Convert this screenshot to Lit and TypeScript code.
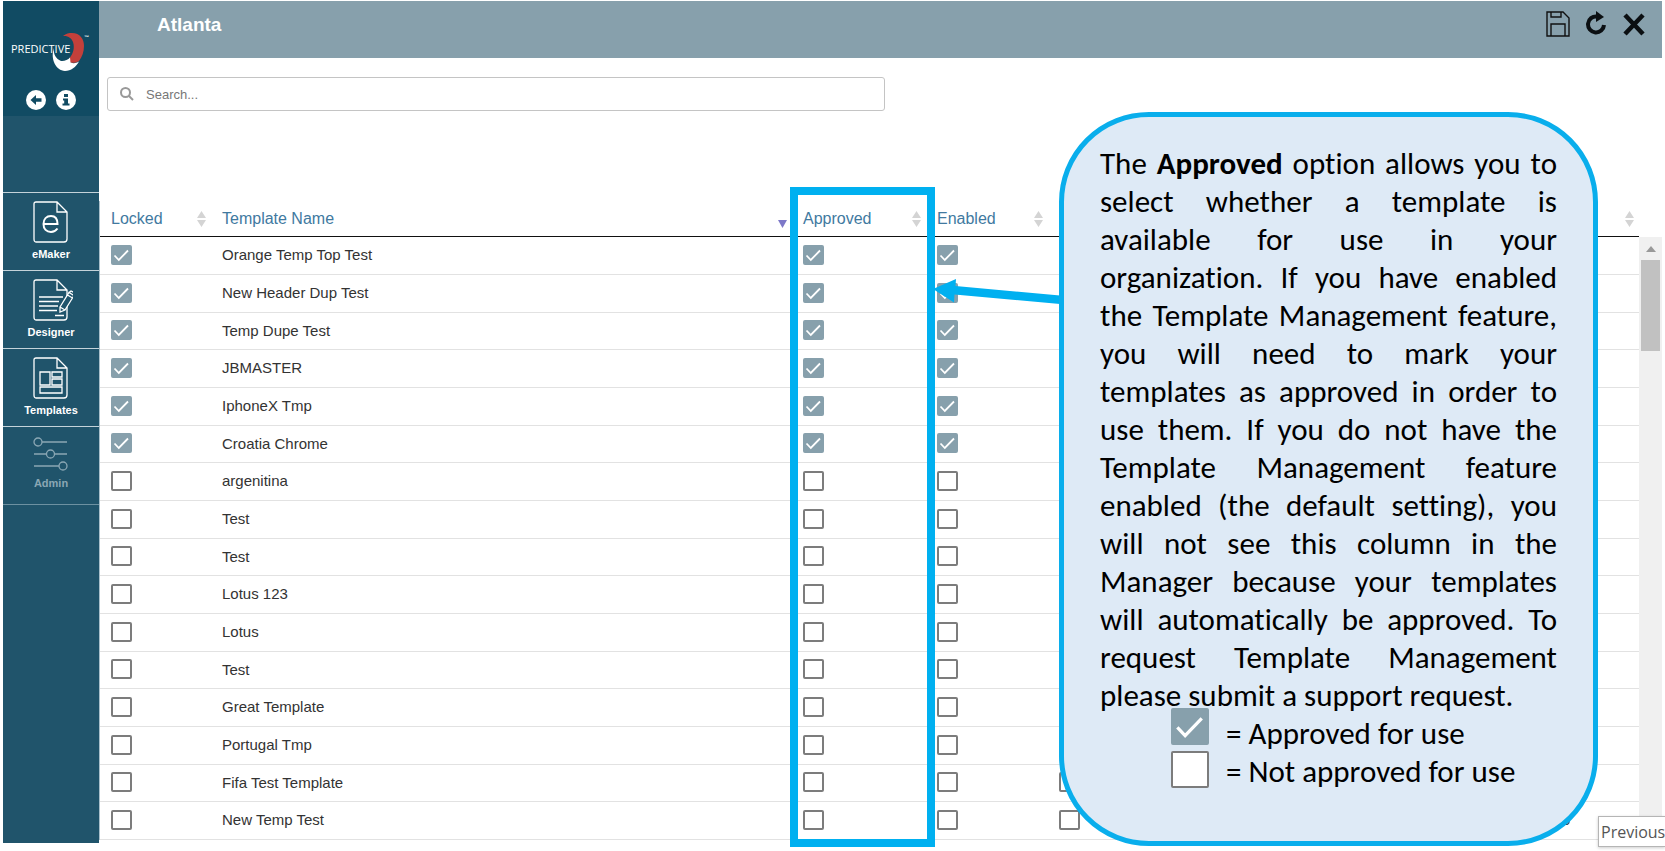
import { LitElement, html, css, svg } from "lit";
import { customElement, property, state } from "lit/decorators.js";

interface Template {
  name: string;
  locked: boolean;
  approved: boolean;
  enabled: boolean;
  uses: number;
}

const row = (name: string, on: boolean): Template => ({ name, locked: on, approved: on, enabled: on, uses: 0 });

const TEMPLATES: Template[] = [
  row("Orange Temp Top Test", true),
  row("New Header Dup Test", true),
  row("Temp Dupe Test", true),
  row("JBMASTER", true),
  row("IphoneX Tmp", true),
  row("Croatia Chrome", true),
  row("argenitina", false),
  row("Test", false),
  row("Test", false),
  row("Lotus 123", false),
  row("Lotus", false),
  row("Test", false),
  row("Great Template", false),
  row("Portugal Tmp", false),
  row("Fifa Test Template", false),
  row("New Temp Test", false),
];

@customElement("check-box")
class CheckBox extends LitElement {
  @property({ type: Boolean }) checked = false;
  @property() label = "";
  @property({ type: Boolean, reflect: true }) large = false;

  static styles = css`
    :host { display: inline-block; vertical-align: top; }
    .box { display: grid; width: 21px; height: 20px; }
    :host([large]) .box { width: 38px; height: 37px; }
    .input, .mark { grid-area: 1 / 1; width: 100%; height: 100%; box-sizing: border-box; }
    .input { appearance: none; margin: 0; border: 2px solid #7c7c7c; border-radius: 2px; background: #fff; }
    .input:checked { background: #87a0ac; border-color: #87a0ac; }
    .mark { display: none; pointer-events: none; }
    .input:checked + .mark { display: block; }
  `;

  render() {
    return html`<label class="box">
      <input class="input" type="checkbox" aria-label=${this.label} .checked=${this.checked}
        @change=${(e: Event) => (this.checked = (e.target as HTMLInputElement).checked)} />
      <svg class="mark" viewBox="0 0 21 20" fill="none" stroke="#fff" stroke-width="1.800">
        <path d="M3.500 10.500 7.800 15 17 5.500" />
      </svg>
    </label>`;
  }
}

const page = svg`<path d="M3 1H24L34 11V38Q34 41 31 41H3Q1 41 1 38V3Q1 1 3 1Z M24 1V11H34" />`;

const NAV = [
  { label: "eMaker", icon: svg`${page}<path d="M11 23H24.500C24.500 17.500 22 15 18 15C13.500 15 10.500 18 10.500 23C10.500 28 13.500 31 18 31C21 31 23 29.500 24.500 27.500" stroke-width="2" />` },
  { label: "Designer", icon: svg`${page}<path d="M6 18H30M6 22.500H26M6 27H25M6 31.500H24M22 36.500H31" /><path d="M27 28 36 13.500 41 16.500 32 31 27 33ZM34.500 16 39.500 19M27 28 32 31M36 13.500 38 12 43 14.500 41 16.500" fill="#20546b" />` },
  { label: "Templates", icon: svg`${page}<path d="M7 15H17V28H7ZM19 15H29V20H19ZM19 22H29V28H19ZM7 30H29V36H7Z" />` },
];

@customElement("app-root")
class AppRoot extends LitElement {
  @state() private query = "";

  static styles = css`
    :host { display: block; font-family: "Liberation Sans", Arial, sans-serif; color: #333; background: #fff; }
    .shell { position: relative; display: flex; box-sizing: border-box; min-height: 100vh; padding: 1px 3px 8px; overflow: hidden; }
    .side { flex: none; width: 96px; display: flex; flex-direction: column; background: #20546b; }
    .brand { box-sizing: border-box; height: 115px; padding-top: 29px; background: #114b63; display: flex; flex-direction: column; align-items: center; gap: 18px; }
    .logo { width: 80px; height: 42px; }
    .word { font: 11px "Open Sans", sans-serif; fill: #fff; }
    .tm { font: bold 5px "Liberation Sans", sans-serif; fill: #fff; }
    .tools { display: flex; gap: 10px; }
    .icon { display: block; padding: 0; border: 0; background: none; cursor: pointer; }
    .icon svg { display: block; }
    .nav { display: flex; flex-direction: column; margin-top: 76px; border-top: 1px solid #c4d3da; }
    .item { display: flex; flex-direction: column; align-items: center; gap: 2px; height: 77px; padding-top: 8px; box-sizing: border-box; margin-bottom: 1px; box-shadow: 0 1px #c4d3da; color: #fff; text-decoration: none; font-size: 11px; line-height: 16px; font-weight: bold; }
    .item svg { fill: none; stroke: #fff; stroke-width: 1.3; }
    .item.dim { color: #8aa7b4; padding-top: 10px; box-shadow: 0 1px #6d91a1; gap: 4px; }
    .item.dim svg { stroke: #8aa7b4; }
    .main { flex: 1; min-width: 0; display: flex; flex-direction: column; }
    .bar { display: flex; justify-content: space-between; box-sizing: border-box; height: 57px; padding: 10px 17px 0 58px; background: #87a0ac; }
    .title { margin: 0; font-size: 19px; line-height: 28px; color: #fff; }
    .actions { display: flex; gap: 16px; align-items: flex-start; }
    .search { display: flex; align-items: center; gap: 12px; box-sizing: border-box; width: calc(50% - 4px); height: 34px; margin: 19px 0 0 8px; padding: 0 12px; border: 1px solid #c4c4c4; border-radius: 3px; }
    .field { flex: 1; border: 0; outline: 0; padding: 0; font: 13px "Liberation Sans", Arial, sans-serif; color: #333; }
    .field::placeholder { color: #777; opacity: 1; }
    .list { display: flex; margin-top: 90px; border-left: 1px solid #a9c0cb; }
    .grid { flex: 1; border-collapse: separate; border-spacing: 0; table-layout: fixed; width: 100%; font-size: 15px; }
    .grid th, .grid td { padding: 0 0 0 11px; text-align: left; font-weight: normal; box-sizing: border-box; }
    .grid th { height: 36px; font-size: 16px; color: #41799f; border-bottom: 1px solid #111; }
    .grid td { height: 38px; padding-bottom: 2px; border-bottom: 1px solid #e2e2e2; }
    .grid tr:nth-child(3n) td { height: 37px; }
    .head { display: flex; justify-content: space-between; align-items: center; padding-right: 5px; }
    .sort { fill: #d4d4d4; }
    .sort.on { fill: #7d78c8; align-self: flex-end; }
    .c1 { width: 111px; } .c2 { width: 581px; } .c3 { width: 134px; } .c4 { width: 122px; } .c5 { width: 120px; } .c7 { width: 88px; }
    .track { flex: none; width: 23px; margin-top: 36px; background: #f0f0f0; display: flex; flex-direction: column; align-items: center; gap: 8px; padding-top: 9px; box-sizing: border-box; }
    .thumb { width: 19px; height: 91px; background: #c1c1c1; }
    .frame { position: absolute; left: 790px; top: 187px; width: 145px; height: 660px; box-sizing: border-box; border: 8px solid #00b0f0; pointer-events: none; }
    .arrow { position: absolute; left: 933px; top: 275px; }
    .callout { position: absolute; left: 1059px; top: 112px; width: 539px; height: 734px; box-sizing: border-box; padding: 27px 36px 0; border: 5px solid #09aeec; border-radius: 90px; background: #deeaf6; color: #000; font: 31px/38px Carlito, Calibri, sans-serif; font-variant-ligatures: none; }
    .text { margin: 0; text-align: justify; }
    .legend { display: flex; gap: 17px; margin-left: 71px; align-items: flex-start; }
    .marks { display: flex; flex-direction: column; gap: 6px; margin-top: -6px; }
    .means { display: flex; flex-direction: column; }
    .tip { position: absolute; left: 1598px; right: 0; top: 816px; box-sizing: border-box; height: 31px; padding-left: 2px; border: 1px solid #b5b5b5; border-right: 0; background: #fff; box-shadow: 0 1px 3px #0003; font: 16px/30px "Open Sans", sans-serif; color: #555; }
  `;

  private sort(active = false) {
    return active
      ? html`<svg class="sort on" width="9" height="8" viewBox="0 0 9 8"><path d="M0 0H9L4.500 8Z" /></svg>`
      : html`<svg class="sort" width="9" height="16" viewBox="0 0 9 16"><path d="M0 7 4.500 0 9 7ZM0 9 4.500 16 9 9Z" /></svg>`;
  }

  private th(label: string, active = false) {
    return html`<th scope="col"><div class="head"><span>${label}</span>${this.sort(active)}</div></th>`;
  }

  render() {
    const rows = TEMPLATES.filter((t) => t.name.toLowerCase().includes(this.query.toLowerCase()));
    return html`<div class="shell">
      <aside class="side">
        <div class="brand">
          <svg class="logo" viewBox="0 0 80 42" role="img" aria-label="Predictive">
            <path d="M52 6C55 3.500 58 3 61 3C69 3 73 9 73 16C73 22 71 27 68 31C65 33 62 33 59 32.500L58.500 28C62 24 64 18 62 12C60.500 8 57 5.500 52 6Z" fill="#c4403b" />
            <path d="M43 18C42 24 45 29 50 31C53 31.500 57 30 59 27.500L59.500 32.500C62 33.500 65 33.500 68 31.500C65 37 60 41 54 41C45 40.500 39 29 43 18Z" fill="#fff" />
            <text class="word" x="0" y="23">PREDICTIVE</text>
            <text class="tm" x="73" y="9">™</text>
          </svg>
          <div class="tools">
            <button class="icon" aria-label="Back"><svg width="20" height="20" viewBox="0 0 20 20"><circle cx="10" cy="10" r="10" fill="#fff" /><path d="M4.500 10 10 5V8.300H15.500V11.700H10V15Z" fill="#114b63" /></svg></button>
            <button class="icon" aria-label="Information"><svg width="20" height="20" viewBox="0 0 20 20"><circle cx="10" cy="10" r="10" fill="#fff" /><path d="M8 4H12V7H8ZM7 8.500H12V13.500H13.500V15.500H6.500V13.500H8.200V10.500H7Z" fill="#114b63" /></svg></button>
          </div>
        </div>
        <nav class="nav">
          ${NAV.map((n) => html`<a class="item" href="#"><svg width="44" height="43" viewBox="-4 0 44 43">${n.icon}</svg>${n.label}</a>`)}
          <a class="item dim" href="#"><svg width="36" height="34" viewBox="0 0 36 34"><path d="M9 5H34M1 17H13M22 17H34M1 29H26" /><circle cx="5" cy="5" r="4" /><circle cx="17.500" cy="17" r="4" /><circle cx="30" cy="29" r="4" /></svg>Admin</a>
        </nav>
      </aside>
      <main class="main">
        <header class="bar">
          <h1 class="title">Atlanta</h1>
          <div class="actions">
            <button class="icon" aria-label="Save"><svg width="24" height="26" viewBox="0 0 24 26" fill="none" stroke="#111" stroke-width="1.400"><path d="M1 1H17L23 7V25H1ZM5 1V6H15V1M5 25V13H19V25" /></svg></button>
            <button class="icon" aria-label="Reload"><svg width="21" height="26" viewBox="0 0 21 26"><path d="M11 5.500A8 8 0 1 0 18 14" fill="none" stroke="#0b0f12" stroke-width="4" /><path d="M10 0 18 6 10 11Z" fill="#0b0f12" /></svg></button>
            <button class="icon" aria-label="Close"><svg width="22" height="26" viewBox="0 0 22 26"><path d="M2 4 20 23M20 4 2 23" stroke="#0b0f12" stroke-width="4.500" /></svg></button>
          </div>
        </header>
        <label class="search">
          <svg width="14" height="14" viewBox="0 0 14 14" fill="none" stroke="#999" stroke-width="2"><circle cx="5.500" cy="5.500" r="4.500" /><path d="M9 9 13 13" /></svg>
          <input class="field" type="search" placeholder="Search..." aria-label="Search" @input=${(e: Event) => (this.query = (e.target as HTMLInputElement).value)} />
        </label>
        <div class="list">
          <table class="grid">
            <colgroup><col class="c1" /><col class="c2" /><col class="c3" /><col class="c4" /><col class="c5" /><col /><col class="c7" /></colgroup>
            <thead><tr>
              ${this.th("Locked")}${this.th("Template Name", true)}${this.th("Approved")}${this.th("Enabled")}${this.th("")}${this.th("")}${this.th("")}
            </tr></thead>
            <tbody>
              ${rows.map((t) => html`<tr>
                <td><check-box label="Locked" ?checked=${t.locked}></check-box></td>
                <td>${t.name}</td>
                <td><check-box label="Approved" ?checked=${t.approved}></check-box></td>
                <td><check-box label="Enabled" ?checked=${t.enabled}></check-box></td>
                <td><check-box label="Option"></check-box></td>
                <td></td>
                <td>${t.uses}</td>
              </tr>`)}
            </tbody>
          </table>
          <div class="track">
            <svg width="10" height="6" viewBox="0 0 10 6"><path d="M0 6 5 0 10 6Z" fill="#999" /></svg>
            <div class="thumb"></div>
          </div>
        </div>
      </main>
      <div class="frame"></div>
      <svg class="arrow" width="130" height="30" viewBox="0 0 130 30" fill="#00b0f0"><path d="M0 14 23 4 22.500 11 127 20.500V29L21.500 19.500 21 27.500Z" /></svg>
      <section class="callout">
        <p class="text">The <b>Approved</b> option allows you to select whether a template is available for use in your organization. If you have enabled the Template Management feature, you will need to mark your templates as approved in order to use them. If you do not have the Template Management feature enabled (the default setting), you will not see this column in the Manager because your templates will automatically be approved. To request Template Management please submit a support request.</p>
        <div class="legend">
          <div class="marks"><check-box large checked label="Approved"></check-box><check-box large label="Not approved"></check-box></div>
          <div class="means"><span>= Approved for use</span><span>= Not approved for use</span></div>
        </div>
      </section>
      <div class="tip" role="tooltip">Previous</div>
    </div>`;
  }
}
